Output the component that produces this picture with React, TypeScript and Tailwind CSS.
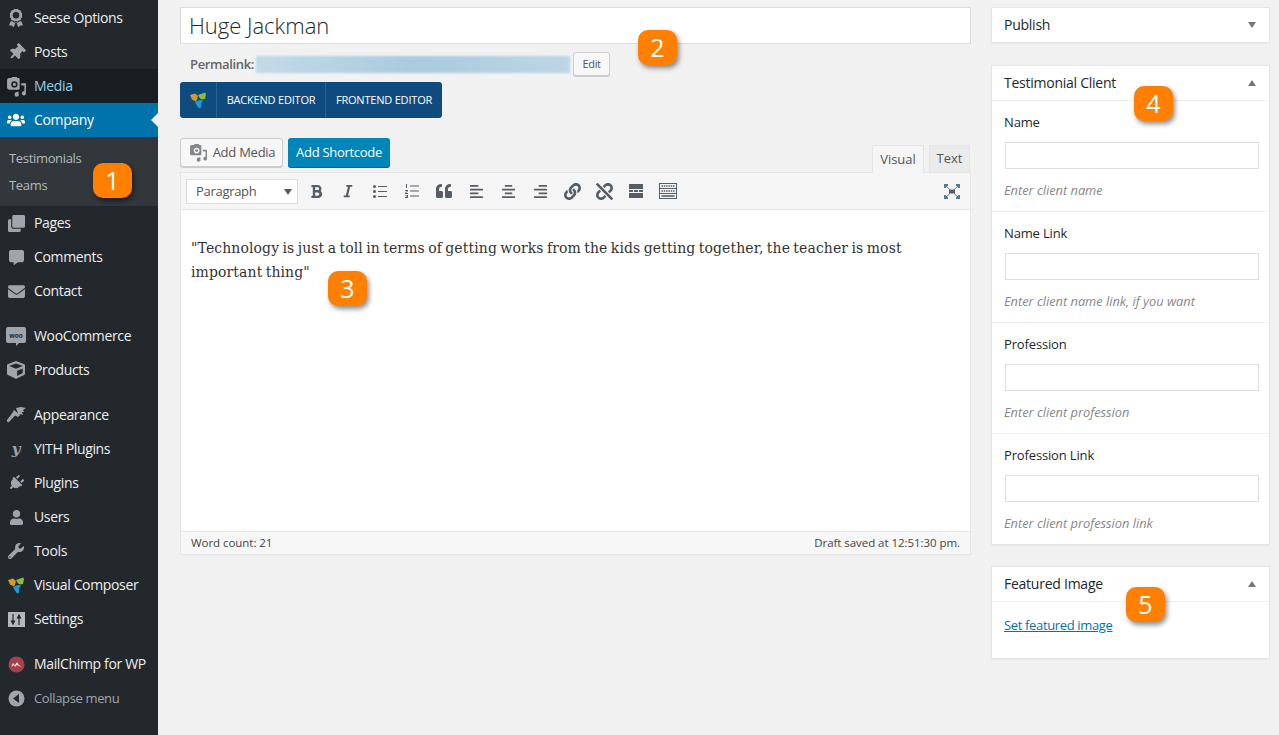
import type { ReactNode } from 'react';
import {
  FaAlignCenter, FaAlignLeft, FaAlignRight, FaAward, FaBold, FaClone, FaCommentAlt, FaCube,
  FaEnvelope, FaItalic, FaLink, FaPlug, FaQuoteLeft, FaThumbtack, FaUnlink,
  FaUser, FaUsers, FaWrench,
} from 'react-icons/fa';

const ui = "font-['Open_Sans','Noto_Sans',sans-serif]";

function MediaIcon({ className = 'text-[#a0a5aa]' }: { className?: string }) {
  return (
    <svg width="21" height="21" viewBox="0 0 20 20" className={className} fill="currentColor">
      <path d="M3 2h2l1-1h4l1 1h1a1 1 0 0 1 1 1v9a1 1 0 0 1-1 1H3a2 2 0 0 1-2-2V4a2 2 0 0 1 2-2zm5 3a3 3 0 1 0 0 6 3 3 0 0 0 0-6z" />
      <circle cx="8" cy="8" r="1.5" />
      <path d="M14.500 7H19v9.500a2 2 0 1 1-1.500-1.900V9h-3zM8 15.500l4-.5v2a2 2 0 1 1-1.500-1.300z" />
    </svg>
  );
}

function VcLogo() {
  return (
    <svg width="17" height="18" viewBox="0 0 17 18">
      <path d="M0 4l5-1.500L8 5 7 8.500l-1 2-4-2z" fill="#d9982a" />
      <path d="M8 4l7-2.500L16 3l-1 5-3 .5-2-1z" fill="#8dbb3c" />
      <path d="M5 11l5-2 3 .5-2 3v4l-2 1-2-3z" fill="#1c9bd8" />
    </svg>
  );
}

function WooIcon() {
  return (
    <svg width="20" height="21" viewBox="0 0 20 21">
      <path d="M2 1h16a2 2 0 0 1 2 2v12a2 2 0 0 1-2 2h-5l-3 3v-3H2a2 2 0 0 1-2-2V3a2 2 0 0 1 2-2z" fill="#a0a5aa" />
      <text x="10" y="11.500" fontSize="6.500" fontWeight="700" textAnchor="middle" fill="#23282d" fontFamily="'Open Sans',sans-serif">woo</text>
    </svg>
  );
}

function BrushIcon() {
  return (
    <svg width="19" height="18" viewBox="0 0 19 18" fill="#a0a5aa">
      <path d="M9 2l5-1 5 1-3 2 1 2-2 0 1 3-3-1-1 2z" />
      <path d="M7 4l6 5-2 2-3-1.500L2 16a1.500 1.500 0 0 1-2-2l5-6.500z" />
    </svg>
  );
}

function YithIcon() {
  return (
    <span className="font-['DejaVu_Serif',serif] text-[15px] leading-none font-bold italic text-[#a0a5aa]">y</span>
  );
}

function MailIcon() {
  return (
    <svg width="17" height="17" viewBox="0 0 17 17">
      <circle cx="8.500" cy="8.500" r="8" fill="#a5414c" />
      <path d="M3 11l2-4 2 2 2-3 2 3 3 2-3-1-2-1-2 2-1-2z" fill="#e9d5d5" />
    </svg>
  );
}

function CollapseIcon() {
  return (
    <svg width="17" height="17" viewBox="0 0 17 17">
      <circle cx="8.500" cy="8.500" r="8" fill="#a0a5aa" />
      <path d="M11 4v9L5 8.500z" fill="#23282d" />
    </svg>
  );
}

function SettingsIcon() {
  return (
    <svg width="17" height="15" viewBox="0 0 17 15">
      <rect width="17" height="15" fill="#b4b9be" />
      <path d="M5 2v9M3.500 9L5 12l1.500-3zM11 13V4M9.500 6L11 3l1.500 3z" stroke="#23282d" strokeWidth="1.200" fill="#23282d" />
    </svg>
  );
}

function MenuRow({ icon, label, active, dim, muted }: { icon: ReactNode; label: string; active?: boolean; dim?: boolean; muted?: boolean }) {
  return (
    <div className={`relative flex h-[34px] items-center ${active ? 'bg-[#0073aa] text-white' : dim ? 'bg-[#191e23] text-[#8fd0ea]' : muted ? 'text-[#a0a5aa]' : 'text-[#eee]'}`}>
      <span className={`flex w-[32px] shrink-0 items-center justify-center ${active ? 'text-white' : 'text-[#a0a5aa]'}`}>{icon}</span>
      <span className={`ml-[2px] tracking-[-0.35px] ${muted ? 'pt-[2px] text-[13px]' : 'pb-[2px] text-[14px]'}`}>{label}</span>
      {active && <span className="absolute top-[10px] right-0 border-y-[7px] border-r-[7px] border-y-transparent border-r-[#f1f1f1]" />}
    </div>
  );
}

function Sidebar() {
  return (
    <aside className="h-full w-[158px] shrink-0 bg-[#23282d] pt-px">
      <MenuRow icon={<FaAward size={18} />} label="Seese Options" />
      <MenuRow icon={<FaThumbtack size={17} className="rotate-45" />} label="Posts" />
      <MenuRow icon={<MediaIcon />} label="Media" dim />
      <MenuRow icon={<FaUsers size={18} />} label="Company" active />
      <div className="h-[69px] bg-[#32373c] pt-[8px] text-[13px] tracking-[-0.33px] text-[#b4b9be]">
        <div className="flex h-[27px] items-center pl-[9px]">Testimonials</div>
        <div className="flex h-[27px] items-center pl-[9px]">Teams</div>
      </div>
      <MenuRow icon={<FaClone size={17} />} label="Pages" />
      <MenuRow icon={<FaCommentAlt size={15} />} label="Comments" />
      <MenuRow icon={<FaEnvelope size={17} />} label="Contact" />
      <div className="h-[11px]" />
      <MenuRow icon={<WooIcon />} label="WooCommerce" />
      <MenuRow icon={<FaCube size={18} />} label="Products" />
      <div className="h-[11px]" />
      <MenuRow icon={<BrushIcon />} label="Appearance" />
      <MenuRow icon={<YithIcon />} label="YITH Plugins" />
      <MenuRow icon={<FaPlug size={16} className="rotate-45" />} label="Plugins" />
      <MenuRow icon={<FaUser size={15} />} label="Users" />
      <MenuRow icon={<FaWrench size={16} />} label="Tools" />
      <MenuRow icon={<VcLogo />} label="Visual Composer" />
      <MenuRow icon={<SettingsIcon />} label="Settings" />
      <div className="h-[11px]" />
      <MenuRow icon={<MailIcon />} label="MailChimp for WP" />
      <MenuRow icon={<CollapseIcon />} label="Collapse menu" muted />
    </aside>
  );
}

function ToolIcon({ children }: { children: ReactNode }) {
  return <span className="flex h-[20px] w-[32px] items-center justify-center text-[#555d66]">{children}</span>;
}

function Toolbar() {
  return (
    <div className="flex h-[37px] items-center border-b border-[#e5e5e5] bg-[#f5f5f5] pr-[10px] pl-[5px]">
      <div className="mr-[2px] flex h-[25px] w-[112px] items-center justify-between border border-[#ddd] bg-white pt-px pr-[5px] pl-[9px] text-[13px] tracking-[-0.3px] text-[#555]">
        Paragraph
        <span className="border-x-[4px] border-t-[6px] border-x-transparent border-t-[#555d66]" />
      </div>
      <ToolIcon><FaBold size={15} /></ToolIcon>
      <ToolIcon><FaItalic size={14} /></ToolIcon>
      <ToolIcon>
        <svg width="14" height="13" viewBox="0 0 14 13" fill="currentColor">
          <circle cx="1.500" cy="1.500" r="1.500" /><circle cx="1.500" cy="6.500" r="1.500" /><circle cx="1.500" cy="11.500" r="1.500" />
          <path d="M5 1h9v1H5zM5 6h9v1H5zM5 11h9v1H5z" />
        </svg>
      </ToolIcon>
      <ToolIcon>
        <svg width="14" height="14" viewBox="0 0 14 14" fill="currentColor">
          <path d="M5 1.500h9v1H5zM5 6.500h9v1H5zM5 11.500h9v1H5z" />
          <path d="M1 0h1v4H1zM0 6h3v1L1 9h2v1H0V9l2-2H0zM0 11h3v3H0v-1h2v-.5H1v-.5h1v-.500H0z" />
        </svg>
      </ToolIcon>
      <ToolIcon><FaQuoteLeft size={16} /></ToolIcon>
      <ToolIcon><FaAlignLeft size={15} /></ToolIcon>
      <ToolIcon><FaAlignCenter size={15} /></ToolIcon>
      <ToolIcon><FaAlignRight size={15} /></ToolIcon>
      <ToolIcon><FaLink size={17} /></ToolIcon>
      <ToolIcon><FaUnlink size={17} /></ToolIcon>
      <ToolIcon>
        <svg width="14" height="14" viewBox="0 0 14 14" fill="currentColor">
          <path d="M0 0h14v5H0zM0 9h14v5H0zM0 6h4v2H0zM5 6h4v2H5zM10 6h4v2h-4z" />
        </svg>
      </ToolIcon>
      <ToolIcon>
        <svg width="18" height="16" viewBox="0 0 18 16" fill="none" stroke="currentColor">
          <rect x=".5" y=".5" width="17" height="15" />
          <path d="M1 5.500h16M1 10.500h16" />
          <path d="M2.500 3h13M2.500 8h13" strokeDasharray="1.500 .8" strokeWidth="1.600" />
          <path d="M2.500 13h13" strokeWidth="1.600" />
        </svg>
      </ToolIcon>
      <span className="ml-auto text-[#555d66]">
        <svg width="16" height="15" viewBox="0 0 16 15" fill="currentColor">
          <path d="M5 5.500h6v4H5z" />
          <path d="M2 2l4 3.500M14 2l-4 3.500M2 13l4-3.500M14 13l-4-3.500" stroke="currentColor" strokeWidth=".8" />
          <path d="M0 0h4v1.500L1.500 4H0zM16 0v4h-1.500L12 1.500V0zM0 15v-4h1.500L4 13.500V15zM16 15h-4v-1.500L14.500 11H16z" fill="#4f7a9c" />
        </svg>
      </span>
    </div>
  );
}

function Editor() {
  return (
    <main className="w-[791px] shrink-0 pt-[7px]">
      <div className="flex h-[37px] items-center border border-[#ddd] bg-white pl-[8px] text-[22px] font-light text-[#23282d]">Huge Jackman</div>

      <div className="mt-[8px] flex h-[24px] items-center pl-[10px] text-[13px] tracking-[-0.35px] text-[#666]">
        <strong className="pt-px font-semibold">Permalink:</strong>
        <span className="ml-[2px] h-[17px] w-[314px] bg-gradient-to-r from-[#c3dae8] via-[#a9cbdf] to-[#bdd6e5] blur-[1px]" />
        <span className="ml-[3px] flex h-[24px] w-[37px] items-center justify-center rounded-[3px] border border-[#ccc] bg-[#f7f7f7] text-[11px] text-[#555] shadow-[0_1px_0_#ccc]">Edit</span>
      </div>

      <div className="mt-[6px] flex h-[36px] w-[262px] items-center rounded-[3px] bg-[#0f4b7f] text-[11px] font-medium tracking-[-0.2px] text-white">
        <span className="flex h-full w-[37px] items-center justify-center border-r border-[#2a6294]"><VcLogo /></span>
        <span className="flex h-full w-[109px] items-center justify-center border-r border-[#2a6294]">BACKEND EDITOR</span>
        <span className="flex h-full flex-1 items-center justify-center">FRONTEND EDITOR</span>
      </div>

      <div className="mt-[20px] flex h-[34px] items-start">
        <span className="flex h-[29px] w-[103px] items-center justify-center gap-[4px] rounded-[3px] border border-[#ccc] bg-[#f7f7f7] text-[13px] tracking-[-0.25px] text-[#555] shadow-[0_1px_0_#ccc]">
          <MediaIcon className="scale-90 text-[#82878c]" />
          Add Media
        </span>
        <span className="ml-[5px] flex h-[29px] w-[102px] items-center justify-center rounded-[3px] bg-[#0085ba] text-[13px] tracking-[-0.3px] text-white shadow-[0_1px_0_#006799]">Add Shortcode</span>
        <div className="ml-auto flex h-[34px] items-end pr-[1px] text-[13px]">
          <span className="relative z-10 flex h-[28px] w-[52px] translate-y-px items-center justify-center border border-b-0 border-[#e5e5e5] bg-[#f5f5f5] text-[#555]">Visual</span>
          <span className="ml-[5px] flex h-[27px] w-[41px] items-center justify-center border border-b-0 border-[#e5e5e5] bg-[#ebebeb] text-[#555]">Text</span>
        </div>
      </div>

      <div className="border border-[#e5e5e5] bg-white">
        <Toolbar />
        <div className="h-[321px] pt-[26px] pr-[30px] pl-[10px] font-['DejaVu_Serif',serif] text-[14px] leading-[24px] tracking-[0.1px] text-[#333] [word-spacing:-1.2px]">
          "Technology is just a toll in terms of getting works from the kids getting together, the teacher is most important thing"
        </div>
        <div className="flex h-[23px] items-center justify-between border-t border-[#e5e5e5] bg-[#f7f7f7] px-[10px] text-[11.500px] tracking-[-0.05px] text-[#444]">
          <span>Word count: 21</span>
          <span>Draft saved at 12:51:30 pm.</span>
        </div>
      </div>
    </main>
  );
}

function BoxHeader({ title, open }: { title: string; open?: boolean }) {
  return (
    <div className={`flex items-center justify-between pr-[13px] pl-[12px] text-[14px] font-medium tracking-[-0.25px] text-[#23282d] ${open ? 'h-[35px] border-b border-[#eee]' : 'h-[34px]'}`}>
      <span className="pb-[2px]">{title}</span>
      {open
        ? <span className="border-x-[4px] border-b-[6px] border-x-transparent border-b-[#72777c]" />
        : <span className="border-x-[4px] border-t-[6px] border-x-transparent border-t-[#72777c]" />}
    </div>
  );
}

function ClientField({ label, hint, last }: { label: string; hint: string; last?: boolean }) {
  return (
    <div className={`px-[12px] pt-[12px] ${last ? 'h-[110px]' : 'h-[111px] border-b border-[#eee]'}`}>
      <div className="text-[13px] leading-[18px] font-medium tracking-[-0.15px] text-[#23282d]">{label}</div>
      <div className="mt-[11px] ml-px h-[27px] w-[254px] border border-[#ddd] bg-white" />
      <div className="mt-[12px] text-[12.800px] leading-[18px] text-[#888] italic">{hint}</div>
    </div>
  );
}

function Sidebox({ children }: { children: ReactNode }) {
  return <section className="w-[279px] border border-[#e5e5e5] bg-white shadow-[0_1px_1px_rgba(0,0,0,0.04)]">{children}</section>;
}

function RightColumn() {
  return (
    <div className="flex w-[279px] shrink-0 flex-col pt-[7px]">
      <Sidebox><BoxHeader title="Publish" /></Sidebox>
      <div className="h-[22px]" />
      <Sidebox>
        <BoxHeader title="Testimonial Client" open />
        <ClientField label="Name" hint="Enter client name" />
        <ClientField label="Name Link" hint="Enter client name link, if you want" />
        <ClientField label="Profession" hint="Enter client profession" />
        <ClientField label="Profession Link" hint="Enter client profession link" last />
      </Sidebox>
      <div className="h-[21px]" />
      <Sidebox>
        <BoxHeader title="Featured Image" open />
        <div className="h-[56px] px-[12px] pt-[14px] text-[13px] leading-[18px] tracking-[-0.35px] text-[#0073aa] underline">Set featured image</div>
      </Sidebox>
    </div>
  );
}

function Badge({ n, pos }: { n: number; pos: string }) {
  return (
    <span className={`absolute flex h-[35px] w-[39px] items-center justify-center rounded-[10px] bg-[#ff7f00] text-[25px] text-white shadow-[2px_3px_5px_rgba(0,0,0,0.45)] ${pos}`}>{n}</span>
  );
}

export default function App() {
  return (
    <div className={`relative flex h-[735px] w-[1279px] overflow-hidden bg-[#f1f1f1] ${ui}`}>
      <Sidebar />
      <div className="ml-[22px] flex gap-[20px]">
        <Editor />
        <RightColumn />
      </div>
      <Badge n={1} pos="top-[163px] left-[93px]" />
      <Badge n={2} pos="top-[30px] left-[638px]" />
      <Badge n={3} pos="top-[271px] left-[328px]" />
      <Badge n={4} pos="top-[86px] left-[1134px]" />
      <Badge n={5} pos="top-[587px] left-[1126px]" />
    </div>
  );
}
